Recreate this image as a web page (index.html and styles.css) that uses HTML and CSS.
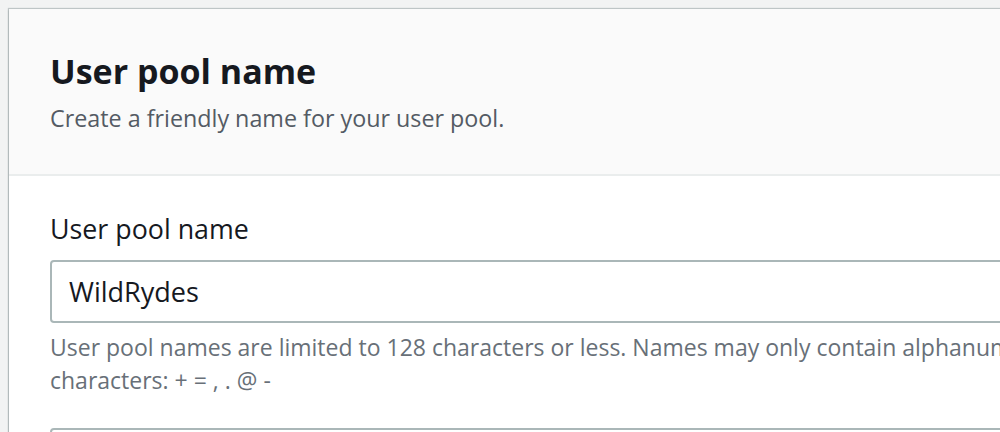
FILE: index.html
```html
<!DOCTYPE html>
<html>
<head>
<meta charset="utf-8">
<link rel="stylesheet" href="styles.css">
</head>
<body>
<div class="page">
  <section class="card">
    <header class="card-header">
      <h2 class="title">User pool name</h2>
      <p class="subtitle">Create a friendly name for your user pool.</p>
    </header>
    <div class="card-body">
      <div class="field">
        <label class="label">User pool name</label>
        <div class="input">WildRydes</div>
        <p class="help">User pool names are limited to 128 characters or less. Names may only contain alphanumeric characters, spaces, and the following special<br>characters: + = , . @ -</p>
      </div>
      <div class="field next">
        <div class="input"></div>
      </div>
    </div>
  </section>
</div>
</body>
</html>
```

FILE: styles.css
```css
html, body {
  margin: 0;
  padding: 0;
  background: #f2f3f3;
  overflow: hidden;
  height: 432px;
}
.page {
  padding: 9px 0 0 9px;
}
.card {
  width: 1200px;
  background: #ffffff;
  box-shadow: -1px -1px 1px rgba(0, 28, 36, 0.2), 0 1px 2px rgba(0, 28, 36, 0.25);
  font-family: "Open Sans", "Noto Sans", sans-serif;
}
.card-header {
  background: #fafafa;
  border-bottom: 2px solid #eaeded;
  padding: 42px 41px 40px 41px;
}
.title {
  margin: 0;
  font-size: 34px;
  line-height: 40px;
  font-weight: 700;
  color: #16191f;
}
.subtitle {
  margin: 11px 0 0 0;
  font-size: 23.3px;
  line-height: 32px;
  color: #545b64;
}
.card-body {
  padding: 36px 41px 0 41px;
}
.label {
  display: block;
  font-size: 26.8px;
  line-height: 34px;
  color: #16191f;
}
.input {
  margin-top: 14px;
  height: 59px;
  border: 2px solid #aab7b8;
  border-radius: 4px;
  box-sizing: content-box;
  padding: 0 17px;
  font-size: 27px;
  line-height: 59px;
  color: #16191f;
}
.help {
  margin: 8px 0 0 0;
  font-size: 23px;
  line-height: 33px;
  color: #687078;
  white-space: nowrap;
}
.next .input {
  margin-top: 31px;
}
```
